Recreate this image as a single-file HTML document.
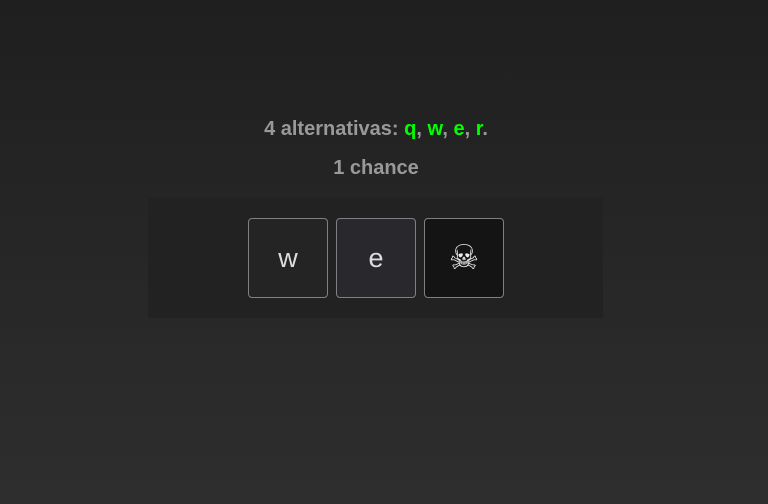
<!DOCTYPE html>
<html><head><style>
html,body{margin:0;width:768px;height:504px;overflow:hidden;background:linear-gradient(#1f1f1f,#2e2e2e);font-family:"Liberation Sans",sans-serif}
.t{position:absolute;left:0;width:752px;text-align:center;color:#999;font-weight:bold;font-size:20px}
.g{color:#0f0}
.panel{position:absolute;left:148px;top:198px;width:455px;height:120px;background:#222}
.k{position:absolute;top:218px;width:78px;height:78px;border:1px solid #808080;border-radius:4px;color:#ddd;font-size:27px;text-align:center;line-height:78px}
</style></head><body>
<div class="t" style="top:118px">4 alternativas: <span class="g">q</span>, <span class="g">w</span>, <span class="g">e</span>, <span class="g">r</span>.</div>
<div class="t" style="top:157px">1 chance</div>
<div class="panel"></div>
<div class="k" style="left:248px;background:#242424">w</div>
<div class="k" style="left:336px;background:#28282d">e</div>
<div class="k" style="left:424px;background:#141414;font-size:34px;color:#eee">☠</div>
</body></html>
